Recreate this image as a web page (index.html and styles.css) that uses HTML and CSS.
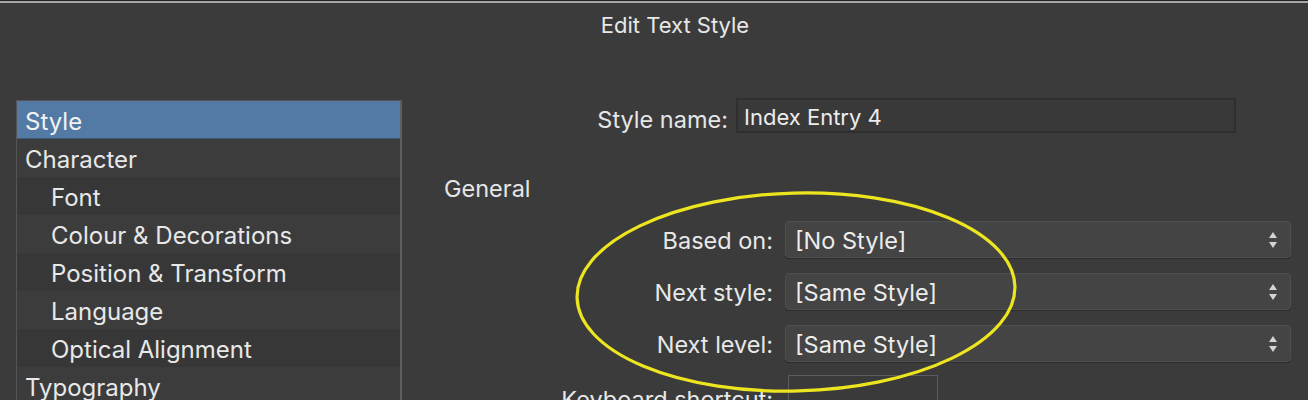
FILE: index.html
```html
<!DOCTYPE html>
<html>
<head>
<meta charset="utf-8">
<link rel="stylesheet" href="styles.css">
</head>
<body>
<div class="window">
  <div class="topline"></div>
  <div class="title">Edit Text Style</div>
  <div class="main">
    <ul class="list">
      <li class="item selected">Style</li>
      <li class="item odd">Character</li>
      <li class="item sub even">Font</li>
      <li class="item sub odd">Colour &amp; Decorations</li>
      <li class="item sub even">Position &amp; Transform</li>
      <li class="item sub odd">Language</li>
      <li class="item sub even">Optical Alignment</li>
      <li class="item odd">Typography</li>
    </ul>
    <div class="pane">
      <div class="name-row">
        <div class="name-label">Style name:</div>
        <div class="name-input">Index Entry 4</div>
      </div>
      <div class="section">General</div>
      <div class="fields">
        <div class="field">
          <div class="flabel">Based on:</div>
          <div class="select"><span>[No Style]</span><span class="stepper"><i class="up"></i><i class="down"></i></span></div>
        </div>
        <div class="field">
          <div class="flabel">Next style:</div>
          <div class="select"><span>[Same Style]</span><span class="stepper"><i class="up"></i><i class="down"></i></span></div>
        </div>
        <div class="field">
          <div class="flabel">Next level:</div>
          <div class="select"><span>[Same Style]</span><span class="stepper"><i class="up"></i><i class="down"></i></span></div>
        </div>
        <div class="field short">
          <div class="flabel">Keyboard shortcut:</div>
          <div class="shortcut"></div>
        </div>
      </div>
    </div>
  </div>
  <svg class="ring" width="470" height="220" viewBox="0 0 470 220">
    <ellipse cx="226" cy="107" rx="219" ry="99" transform="rotate(-1.5 226 107)" fill="none" stroke="#ece51f" stroke-width="3.2"/>
  </svg>
</div>
</body>
</html>
```

FILE: styles.css
```css
* { box-sizing: border-box; }
html, body { margin: 0; padding: 0; }
body {
  background: #3b3b3b;
  font-family: Inter, "Open Sans", "Liberation Sans", sans-serif;
  color: #e6e6e6;
}
.window {
  position: relative;
  width: 1308px;
  height: 400px;
  overflow: hidden;
  background: #3b3b3b;
}
.topline {
  height: 3px;
  border-top: 1px solid #222;
  background: #a8a8a8;
}
.title {
  height: 95px;
  text-align: center;
  font-size: 22px;
  line-height: 26px;
  padding-top: 9px;
  padding-left: 42px;
  color: #e8e8e8;
}
.main {
  display: flex;
  padding-left: 16px;
}
.list {
  list-style: none;
  margin: 2px 0 0 0;
  padding: 0;
  width: 386px;
  border: 1px solid #555;
  border-right: 2px solid #5e5e5e;
  border-bottom: none;
  height: 310px;
  background: #3a3a3a;
}
.item {
  height: 38px;
  line-height: 36px;
  padding-top: 3px;
  font-size: 24px;
  padding-left: 8px;
  color: #e8e8e8;
}
.item.sub { padding-left: 34px; }
.item.odd { background: #3c3c3c; }
.item.even { background: #373737; }
.item.selected {
  background: #527aa5;
  color: #f2f2f2;
  border-bottom: 1px solid #3f5a78;
  line-height: 35px;
}
.pane {
  flex: 1;
}
.name-row {
  display: flex;
  align-items: center;
  height: 35px;
}
.name-label {
  width: 326px;
  text-align: right;
  font-size: 23.5px;
  padding-top: 8px;
}
.name-input {
  margin-left: 8px;
  width: 500px;
  height: 35px;
  border: 2px solid #2f2f2f;
  background: #393939;
  font-size: 22px;
  line-height: 29px;
  padding-top: 3px;
  padding-left: 6px;
  color: #ececec;
}
.section {
  margin-top: 43px;
  padding-left: 42px;
  font-size: 23.5px;
  line-height: 26px;
}
.fields {
  margin-top: 19px;
  display: flex;
  flex-direction: column;
  gap: 15px;
}
.field {
  display: flex;
  align-items: center;
  height: 37px;
}
.flabel {
  width: 371px;
  text-align: right;
  font-size: 23.5px;
  padding-top: 2px;
  color: #e8e8e8;
}
.select {
  margin-left: 12px;
  width: 506px;
  height: 37px;
  border-radius: 4px;
  background: #444;
  border: 1px solid #4f4f4f;
  box-shadow: 0 1px 0 #2c2c2c;
  display: flex;
  align-items: center;
  justify-content: space-between;
  padding-left: 9px;
  padding-right: 13px;
  font-size: 23.5px;
  color: #ececec;
}
.select span:first-child { padding-top: 2px; }
.stepper {
  display: flex;
  flex-direction: column;
  gap: 4px;
  align-items: center;
}
.stepper i {
  display: block;
  width: 0;
  height: 0;
  border-left: 4px solid transparent;
  border-right: 4px solid transparent;
}
.stepper .up { border-bottom: 6px solid #d4d4d4; }
.stepper .down { border-top: 6px solid #d4d4d4; }
.field.short {
  margin-top: -2px;
  align-items: flex-start;
}
.field.short .flabel {
  padding-top: 10px;
}
.shortcut {
  margin-left: 15px;
  width: 150px;
  height: 40px;
  border: 1px solid #5c5c5c;
  background: #3a3a3a;
}
.ring {
  position: absolute;
  left: 570px;
  top: 185px;
}
```
